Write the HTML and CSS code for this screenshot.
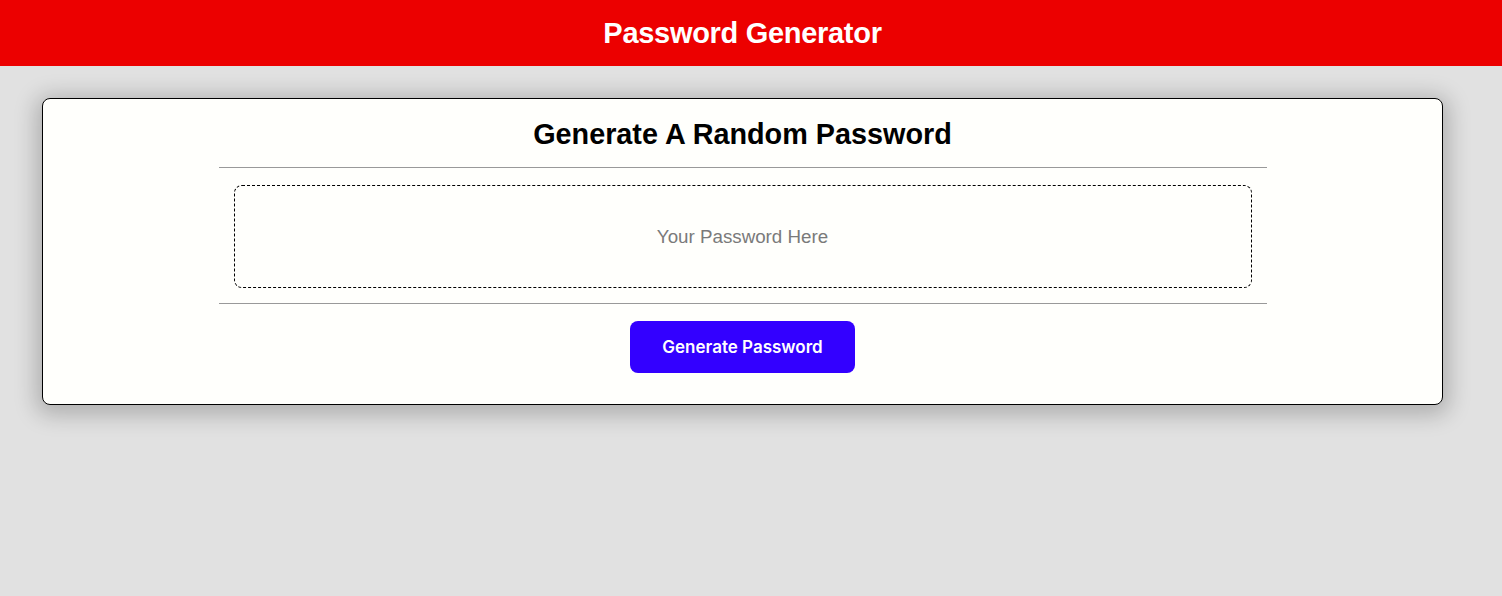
FILE: index.html
```html
<!DOCTYPE html>
<html lang="en">
<head>
<meta charset="utf-8">
<title>Password Generator</title>
<link rel="stylesheet" href="styles.css">
</head>
<body>
<header class="site-header">
  <h1 class="site-title">Password Generator</h1>
</header>
<main class="wrapper">
  <section class="card">
    <h2 class="card-title">Generate A Random Password</h2>
    <hr class="divider">
    <div class="password-box">
      <textarea class="password" readonly placeholder="Your Password Here" aria-label="Generated Password"></textarea>
    </div>
    <hr class="divider">
    <div class="card-footer">
      <button class="btn" type="button">Generate Password</button>
    </div>
  </section>
</main>
</body>
</html>
```

FILE: styles.css
```css
*, *::before, *::after { box-sizing: border-box; }
html, body { margin: 0; padding: 0; }
body {
  background: #e1e1e1;
  font-family: "Liberation Sans", Arial, sans-serif;
  min-height: 596px;
}
.site-header {
  background: #ec0000;
  height: 66px;
  padding-right: 17px;
  display: flex;
  align-items: center;
  justify-content: center;
}
.site-title {
  margin: 0;
  color: #fff;
  font-size: 29px;
  font-weight: 700;
  letter-spacing: -0.3px;
}
.wrapper {
  padding: 32px 59px 0 42px;
}
.card {
  background: #fffffc;
  border: 1px solid #000;
  border-radius: 8px;
  box-shadow: 0 4px 22px 6px rgba(0,0,0,0.22);
  height: 307px;
  display: flex;
  flex-direction: column;
  align-items: center;
}
.card-title {
  margin: 0;
  height: 68px;
  padding-top: 2px;
  line-height: 66px;
  font-size: 28.8px;
  font-weight: 700;
  color: #000;
}
.divider {
  width: 1048px;
  margin: 0;
  border: none;
  border-top: 1px solid #999;
  height: 0;
}
.password-box {
  width: 1048px;
  padding: 17px 15px 15px 15px;
}
.password {
  display: block;
  width: 100%;
  height: 103px;
  border: 1px dashed #000;
  border-radius: 8px;
  background: transparent;
  resize: none;
  overflow: hidden;
  padding: 40px 10px 0;
  font-family: "Liberation Sans", Arial, sans-serif;
  font-size: 18.75px;
  text-align: center;
  color: #7a7a7a;
  outline: none;
}
.password::placeholder { color: #7a7a7a; opacity: 1; }
.card-footer {
  padding-top: 17px;
}
.btn {
  width: 225px;
  height: 52px;
  border: none;
  border-radius: 8px;
  background: #3300ff;
  color: #fff;
  font-family: Inter, "Liberation Sans", sans-serif;
  font-size: 17px;
  font-weight: 600;
  cursor: pointer;
}
```
